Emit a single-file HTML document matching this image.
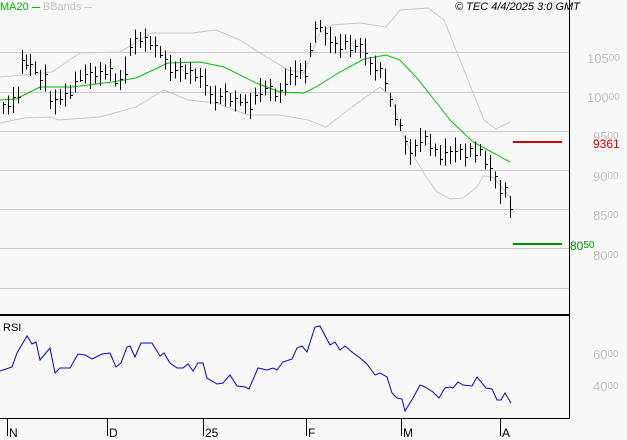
<!DOCTYPE html>
<html><head><meta charset="utf-8"><style>
html,body{margin:0;padding:0;background:#f8f8f8;}
body{width:627px;height:440px;overflow:hidden;position:relative;font-family:"Liberation Sans",sans-serif;}
.t{position:absolute;font-size:13px;white-space:nowrap;line-height:13px;}
.s{font-size:10px;position:relative;top:-2px;}
</style></head><body>
<svg id="c" width="627" height="440" style="position:absolute;left:0;top:0" xmlns="http://www.w3.org/2000/svg" shape-rendering="crispEdges">
<g stroke="#c8c8c8" stroke-width="1">
<line x1="0" y1="52.5" x2="569" y2="52.5"/><line x1="0" y1="92.5" x2="569" y2="92.5"/>
<line x1="0" y1="131.5" x2="569" y2="131.5"/><line x1="0" y1="170.5" x2="569" y2="170.5"/>
<line x1="0" y1="209.5" x2="569" y2="209.5"/><line x1="0" y1="248.5" x2="569" y2="248.5"/>
<line x1="0" y1="288.5" x2="569" y2="288.5"/>
</g>
<g fill="none" stroke="#c8c8c8" stroke-width="1" shape-rendering="auto">
<polyline points="0,77 24,75 52,72 80,53 120,52 152,33 192,33 216,30 240,40 260,53 288,70 304,73 320,33 332,25 360,23 386,27 400,10 428,8 444,20 456,50 476,100 484,120 496,129 510,122"/>
<polyline points="0,123 24,118 52,117 58,120 100,117 136,107 164,90 188,100 216,103 248,115 280,115 308,120 326,127 352,107 380,87 392,97 400,127 410,150 425,175 437,192 450,199 463,198 477,187 483,176 493,177 510,197"/>
</g>
<polyline fill="none" stroke="#00c000" stroke-width="1" shape-rendering="auto" points="0,100 16,99 40,87 72,87 112,82 136,78 168,63 200,62 224,67 256,83 280,92 304,93 316,87 340,72 364,59 386,55 400,60 416,77 440,107 450,120 473,142 510,162"/>
<g id="bars" stroke="#000" stroke-width="1"></g>
<line x1="513" y1="142" x2="562" y2="142" stroke="#cc0000" stroke-width="2"/>
<line x1="513" y1="244" x2="562" y2="244" stroke="#009000" stroke-width="2"/>
<line x1="569.5" y1="0" x2="569.5" y2="419" stroke="#000"/>
<line x1="0" y1="315" x2="569" y2="315" stroke="#000" stroke-width="2"/>
<line x1="0" y1="418.5" x2="569" y2="418.5" stroke="#000"/>
<g stroke="#000"><line x1="7.5" y1="419" x2="7.5" y2="436"/><line x1="107.5" y1="419" x2="107.5" y2="436"/><line x1="203.5" y1="419" x2="203.5" y2="436"/><line x1="306.5" y1="419" x2="306.5" y2="436"/><line x1="401.5" y1="419" x2="401.5" y2="436"/><line x1="500.5" y1="419" x2="500.5" y2="436"/></g>
<polyline fill="none" stroke="#0000cc" stroke-width="1" shape-rendering="auto" points="0,371 12,367 17,353 27,336 32,344 36,342 40,360 50,348 55,373 60,368 70,368 78,354 85,355 92,359 102,354 110,353 116,367 121,363 127,347 130,346 135,357 141,343 152,343 160,356 164,353 170,363 177,368 183,368 188,364 193,371 198,363 203,363 207,378 217,384 223,383 230,375 237,386 245,387 249,389 258,368 267,370 273,368 277,370 283,362 292,359 297,348 302,346 307,352 315,327 320,326 330,345 335,342 340,350 345,346 352,352 360,358 367,364 375,375 380,373 387,377 392,393 397,398 402,399 405,411 413,398 420,385 425,387 433,392 439,398 445,388 450,387 453,388 458,382 463,385 472,386 477,377 486,388 492,389 497,400 501,400 505,393 511,403"/>
</svg>
<div class="t" style="left:0;top:1px;color:#00b000;font-size:11px">MA20 <span style="display:inline-block;width:8px;border-top:1px solid #00c000;vertical-align:middle"></span> <span style="color:#c0c0c0">BBands <span style="display:inline-block;width:8px;border-top:1px solid #c8c8c8;vertical-align:middle"></span></span></div>
<div class="t" style="left:455px;top:1px;font-style:italic;font-size:11px">© TEC 4/4/2025 3:0 GMT</div>
<div class="t" style="left:587px;top:52px;color:#c0c0c0">105<span class="s">00</span></div>
<div class="t" style="left:587px;top:91px;color:#c0c0c0">100<span class="s">00</span></div>
<div class="t" style="left:593px;top:130px;color:#c0c0c0">95<span class="s">00</span></div>
<div class="t" style="left:593px;top:138px;color:#cc0000;font-size:12px">9361</div>
<div class="t" style="left:593px;top:170px;color:#c0c0c0">90<span class="s">00</span></div>
<div class="t" style="left:593px;top:209px;color:#c0c0c0">85<span class="s">00</span></div>
<div class="t" style="left:570px;top:240px;color:#009000;font-size:12px">80<span class="s">50</span></div>
<div class="t" style="left:593px;top:249px;color:#c0c0c0">80<span class="s">00</span></div>
<div class="t" style="left:593px;top:348px;color:#c0c0c0">60<span class="s">00</span></div>
<div class="t" style="left:593px;top:380px;color:#c0c0c0">40<span class="s">00</span></div>
<div class="t" style="left:3px;top:322px;font-size:11px">RSI</div>
<div class="t" style="left:9px;top:427px;font-size:12px">N</div>
<div class="t" style="left:109px;top:427px;font-size:12px">D</div>
<div class="t" style="left:205px;top:427px;font-size:12px">25</div>
<div class="t" style="left:308px;top:427px;font-size:12px">F</div>
<div class="t" style="left:403px;top:427px;font-size:12px">M</div>
<div class="t" style="left:502px;top:427px;font-size:12px">A</div>
<script>
var m=[[3,108],[8,105],[13,100],[18,95],[22,62],[26,62],[30,65],[35,68],[40,80],[45,78],[50,100],[55,102],[60,97],[65,95],[70,92],[75,82],[80,76],[85,74],[90,76],[95,75],[100,74],[105,72],[110,70],[115,80],[120,80],[125,70],[130,47],[135,42],[140,40],[145,40],[150,43],[155,47],[160,52],[165,60],[170,68],[175,70],[180,70],[185,72],[190,73],[195,75],[200,78],[205,82],[210,95],[215,98],[220,96],[225,95],[230,100],[235,101],[240,100],[245,104],[250,106],[255,96],[260,90],[265,88],[270,90],[275,95],[280,93],[285,82],[290,76],[295,73],[300,71],[305,72],[310,50],[315,32],[320,26],[325,36],[330,40],[335,45],[340,46],[345,42],[350,46],[355,46],[360,48],[365,52],[370,66],[375,68],[380,70],[385,80],[390,100],[395,115],[400,125],[405,145],[410,152],[415,148],[420,140],[425,138],[430,145],[435,150],[440,155],[445,152],[450,155],[455,150],[460,152],[465,155],[470,150],[475,152],[480,150],[485,160],[490,168],[495,180],[500,192],[505,190],[510,207]];
var g=document.getElementById('bars'),s='';
m.forEach(function(p,i){var h=12+((i*7)%16);var x=p[0]+.5,y=p[1];var c=y+((i*5)%9)-4;
s+='<line x1="'+x+'" y1="'+(y-h/2)+'" x2="'+x+'" y2="'+(y+h/2)+'"/><line x1="'+(x-.5)+'" y1="'+(c+.5)+'" x2="'+(x+2.5)+'" y2="'+(c+.5)+'"/>';});
g.innerHTML=s;
</script>
</body></html>
